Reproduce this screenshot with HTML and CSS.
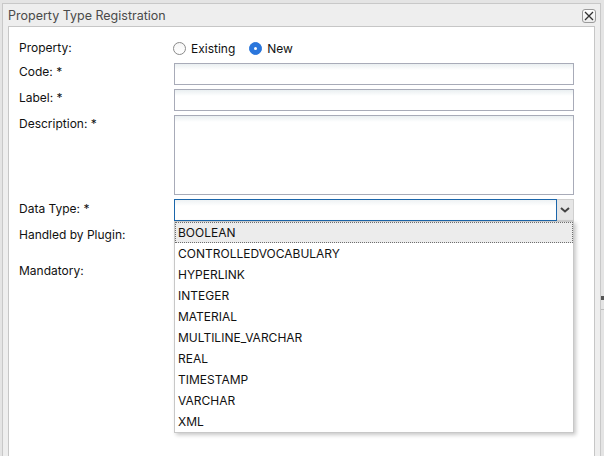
FILE: index.html
```html
<!DOCTYPE html>
<html>
<head>
<meta charset="utf-8">
<link rel="stylesheet" href="styles.css">
</head>
<body>
<div class="backdrop-mark"></div>
<div class="dialog">
  <div class="titlebar">
    <span class="title">Property Type Registration</span>
    <span class="close">
      <svg width="10" height="10" viewBox="0 0 10 10"><path d="M1 1L9 9M9 1L1 9" stroke="#333" stroke-width="1.3" fill="none"/></svg>
    </span>
  </div>
  <div class="content">
    <form class="form">
      <div class="label row-prop">Property:</div>
      <div class="field row-prop radios">
        <span class="radio"></span><span class="radio-text">Existing</span>
        <span class="radio checked"></span><span class="radio-text">New</span>
      </div>

      <div class="label">Code: *</div>
      <div class="field"><div class="input"></div></div>

      <div class="label">Label: *</div>
      <div class="field"><div class="input"></div></div>

      <div class="label">Description: *</div>
      <div class="field"><div class="input textarea"></div></div>

      <div class="label lbl-combo">Data Type: *</div>
      <div class="field">
        <div class="combo">
          <div class="combo-input"></div>
          <div class="combo-btn">
            <svg width="10" height="6" viewBox="0 0 10 6"><path d="M1 1L5 4.5L9 1" stroke="#444" stroke-width="2" fill="none"/></svg>
          </div>
          <ul class="dropdown">
            <li class="selected">BOOLEAN</li>
            <li>CONTROLLEDVOCABULARY</li>
            <li>HYPERLINK</li>
            <li>INTEGER</li>
            <li>MATERIAL</li>
            <li>MULTILINE_VARCHAR</li>
            <li>REAL</li>
            <li>TIMESTAMP</li>
            <li>VARCHAR</li>
            <li>XML</li>
          </ul>
        </div>
      </div>

      <div class="label row-plugin">Handled by Plugin:</div>
      <div class="field row-plugin"></div>

      <div class="label lbl-mand">Mandatory:</div>
      <div class="field"></div>
    </form>
  </div>
</div>
</body>
</html>
```
FILE: styles.css
```css
html, body {
  margin: 0;
  padding: 0;
  height: 100%;
  overflow: hidden;
}
body {
  background: #e4e4e4;
  font-family: "Inter", "Noto Sans", sans-serif;
  font-size: 12px;
  color: #111;
  position: relative;
}
.backdrop-mark {
  position: absolute;
  left: 601px;
  top: 296px;
  width: 3px;
  height: 14px;
  border-top: 4px solid #555;
  border-bottom: 1px solid #bdbdbd;
  box-sizing: border-box;
}
.dialog {
  position: absolute;
  left: 2px;
  top: 3px;
  width: 597px;
  height: 470px;
  background: #eeeeee;
  border: 1px solid #c8c8c8;
  display: flex;
  flex-direction: column;
}
.titlebar {
  height: 22px;
  display: flex;
  align-items: center;
  justify-content: space-between;
  padding: 0 4px 0 5px;
}
.title {
  font-size: 12.5px;
  color: #4a4a4a;
}
.close {
  width: 12px;
  height: 12px;
  border: 1px solid #9a9a9a;
  border-radius: 3px;
  background: linear-gradient(#ffffff, #ececec);
  display: flex;
  align-items: center;
  justify-content: center;
  margin-top: 2px;
}
.content {
  flex: 1;
  margin: 0 5px;
  background: #fff;
  border: 1px solid #c6c6c6;
  border-bottom: none;
}
.form {
  display: grid;
  grid-template-columns: 155px 400px;
  row-gap: 4px;
  padding: 11px 0 0 10px;
  margin: 0;
}
.label {
  line-height: 16px;
  padding-top: 1px;
}
.row-prop {
  height: 21px;
}
.label.row-prop {
  padding-top: 2px;
  height: 19px;
}
.radios {
  display: flex;
  align-items: center;
  height: 21px;
}
.radio {
  width: 11px;
  height: 11px;
  border: 1px solid #8a8a8a;
  border-radius: 50%;
  background: linear-gradient(#f6f6f6, #ffffff);
  margin-left: -1px;
  position: relative;
}
.radio.checked {
  background: #2a76dc;
  border-color: #2a76dc;
  margin-left: 14px;
}
.radio.checked::after {
  content: "";
  position: absolute;
  left: 4px;
  top: 4px;
  width: 3px;
  height: 3px;
  border-radius: 50%;
  background: #fff;
}
.radio-text {
  margin-left: 5px;
}
.input {
  height: 20px;
  border: 1px solid #a8abb8;
  background: linear-gradient(#eaeff1 0px, #ffffff 6px);
}
.input.textarea {
  height: 78px;
}
.lbl-combo {
  padding-top: 2px;
}
.combo {
  position: relative;
  display: flex;
  height: 22px;
}
.combo-input {
  flex: 1;
  border: 1px solid #1b66ab;
  background: linear-gradient(#eef2f4 0px, #ffffff 6px);
}
.combo-btn {
  width: 16px;
  background: #e6e6e6;
  border: 1px solid #cfcfcf;
  border-left: none;
  display: flex;
  align-items: center;
  justify-content: center;
}
.dropdown {
  position: absolute;
  top: 22px;
  left: 0;
  width: 398px;
  margin: 0;
  padding: 0;
  list-style: none;
  background: #fff;
  border: 1px solid #c8c8c8;
  box-shadow: 2px 2px 4px rgba(0, 0, 0, 0.22);
  z-index: 5;
}
.dropdown li {
  height: 21px;
  line-height: 19px;
  padding-left: 2px;
  color: #111;
  border: 1px solid transparent;
  box-sizing: border-box;
}
.dropdown li.selected {
  background: #ececec;
  border: 1px dotted #6e6e6e;
}
.row-plugin {
  height: 34px;
}
.label.row-plugin {
  padding-top: 2px;
  height: 32px;
}
.lbl-mand {
  padding-top: 0;
}
```
